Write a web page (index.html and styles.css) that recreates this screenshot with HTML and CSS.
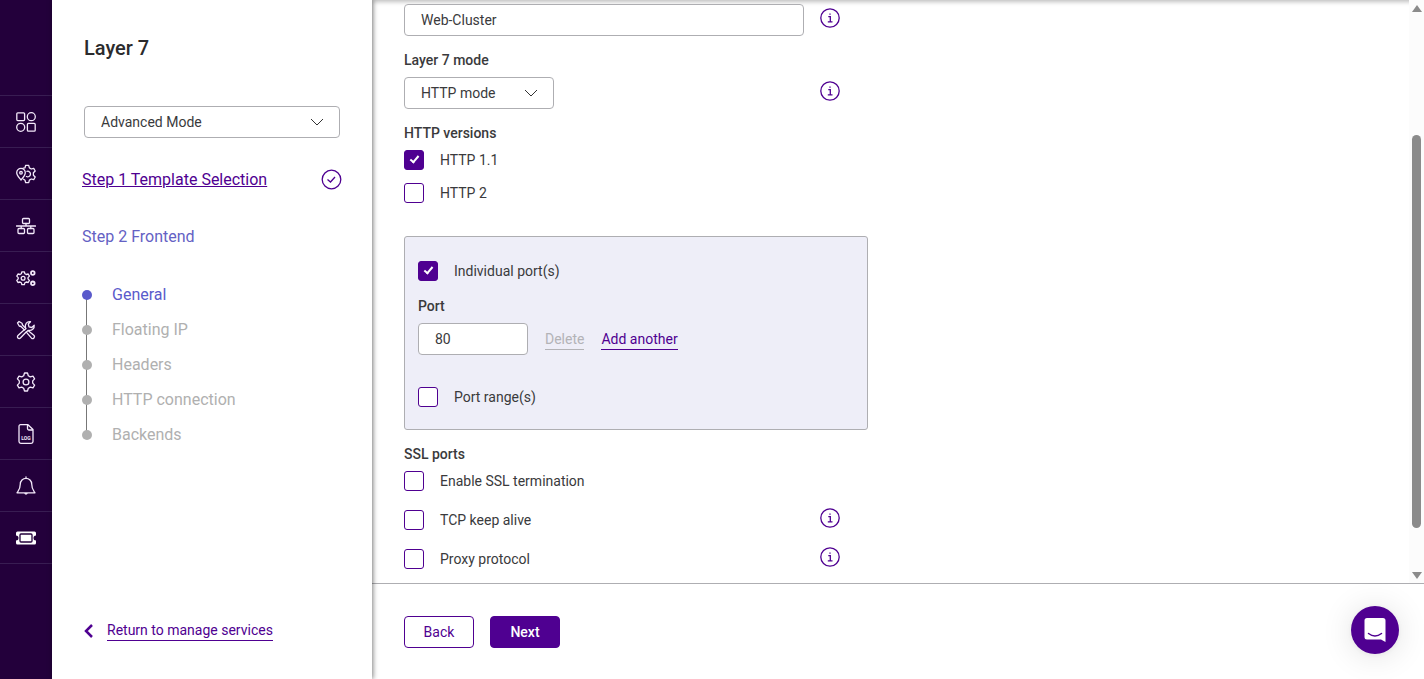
FILE: index.html
```html
<!DOCTYPE html>
<html lang="en">
<head>
    <meta charset="UTF-8">
    <meta name="viewport" content="width=device-width, initial-scale=1.0">
    <title>Layer 7</title>
    <link rel="stylesheet" href="styles.css">
</head>
<body>
    <!-- Icon rail -->
    <nav class="rail" aria-label="Main">
        <a href="#" aria-label="Dashboard">
            <svg class="icon" viewBox="0 0 20 20"><rect x="0.800" y="0.800" width="7.800" height="7.800" rx="1"/><circle cx="15.300" cy="4.700" r="4"/><circle cx="4.700" cy="15.300" r="4"/><rect x="11.400" y="11.400" width="7.800" height="7.800" rx="1"/></svg>
        </a>
        <a href="#" aria-label="Locations">
            <svg class="icon" viewBox="0 0 20 20"><path d="M7.200 4.200 L9 3.800 L9.700 1.300 H12.700 L13.400 3.900 L15.300 5 L17.700 4.300 L19.200 7 L17.400 8.800 V11.200 L19.200 13 L17.700 15.700 L15.300 15 L13.400 16.100 L12.700 18.700 H9.700 L9 16.200 L7.600 15.200"/><path d="M5 16 C3.500 14 0.700 11.300 0.700 8.700 A4.300 4.300 0 0 1 9.300 8.700 C9.300 11.300 6.600 14 5 16 Z"/><circle cx="5" cy="8.800" r="1.300"/><path d="M11 7.300 A2.800 2.800 0 1 1 10.400 12.500"/></svg>
        </a>
        <a href="#" aria-label="Network">
            <svg class="icon" viewBox="0 0 20 20"><rect x="6.500" y="2.500" width="7" height="5" rx="1"/><rect x="2" y="12.500" width="6.500" height="5" rx="1"/><rect x="11.500" y="12.500" width="6.500" height="5" rx="1"/><path d="M0.500 10 H19.500 M10 7.500 V10 M5.200 10 V12.500 M14.800 10 V12.500"/></svg>
        </a>
        <a href="#" aria-label="Cluster settings">
            <svg class="icon" viewBox="0 0 20 20"><path d="M5.900 3.800 H8.300 L8.900 5.800 L10.200 6.500 L12.200 6 L13.400 8.100 L12 9.600 V10.900 L13.400 12.400 L12.200 14.500 L10.200 14 L8.900 14.700 L8.300 16.700 H5.900 L5.300 14.700 L4 14 L2 14.500 L0.800 12.400 L2.200 10.900 V9.600 L0.800 8.100 L2 6 L4 6.500 L5.300 5.800 Z"/><circle cx="7.100" cy="10.200" r="1.900"/><circle class="thick" cx="16.800" cy="5" r="1.800"/><circle class="thick" cx="16.800" cy="15.300" r="1.800"/></svg>
        </a>
        <a href="#" aria-label="Tools">
            <svg class="icon" viewBox="0 0 20 20"><path d="M1.500 3 L3 1.500 L6 3.200 L6.500 5 L10 8.500 L8.500 10 L5 6.500 L3.200 6 Z"/><path d="M10.700 11.700 L12 10.500 L18.100 15.500 A1.900 1.900 0 0 1 15.500 18.200 L10.500 12.300 Z"/><path d="M8.300 9.700 L2 15.500 A1.700 1.700 0 0 0 4.400 18 L10.400 11.700"/><path d="M9.500 8 C8.500 4 11 1.200 14.500 1.700 L12.300 4 L13 6.800 L15.800 7.500 L18.200 5.200 C18.700 8.500 15.800 11 12.500 10.300"/></svg>
        </a>
        <a href="#" aria-label="Settings">
            <svg class="icon" viewBox="0 0 20 20"><path d="M8.500 1 H11.500 L12.300 3.700 L14.300 4.900 L17 4.200 L18.600 6.900 L16.700 8.900 V11.100 L18.600 13.100 L17 15.800 L14.300 15.100 L12.300 16.300 L11.500 19 H8.500 L7.700 16.300 L5.700 15.100 L3 15.800 L1.400 13.100 L3.300 11.100 V8.900 L1.400 6.900 L3 4.200 L5.700 4.900 L7.700 3.700 Z"/><circle cx="10" cy="10" r="2.900"/></svg>
        </a>
        <a href="#" aria-label="Logs">
            <svg class="icon" viewBox="0 0 20 20"><path d="M4.500 0.700 H12 L17 5.500 V17.500 A1.800 1.800 0 0 1 15.200 19.300 H4.800 A1.800 1.800 0 0 1 3 17.500 V2.200 A1.500 1.500 0 0 1 4.500 0.700 Z M11.500 1 V4.500 A1.500 1.500 0 0 0 13 6 H17"/><text x="10" y="15.500">LOG</text></svg>
        </a>
        <a href="#" aria-label="Alerts">
            <svg class="icon" viewBox="0 0 20 20"><path d="M10 0.800 V2.300 M10 2.300 A5.700 5.700 0 0 0 4.300 8 C4.300 13 3 14 1 16.800 H19 C17 14 15.700 13 15.700 8 A5.700 5.700 0 0 0 10 2.300 Z M8.500 17 Q10 19.200 11.500 17"/></svg>
        </a>
        <a href="#" aria-label="Support">
            <svg class="icon" viewBox="0 0 20 20"><path class="solid" d="M1.500 3.500 H18.500 A1.500 1.500 0 0 1 20 5 V7.500 A2.500 2.500 0 0 0 20 12.500 V15 A1.500 1.500 0 0 1 18.500 16.500 H1.500 A1.500 1.500 0 0 1 0 15 V12.500 A2.500 2.500 0 0 0 0 7.500 V5 A1.500 1.500 0 0 1 1.500 3.500 Z"/><rect class="inset" x="4" y="6" width="12" height="8" rx="1"/></svg>
        </a>
    </nav>

    <!-- Wizard steps -->
    <aside class="sidebar">
        <h1>Layer 7</h1>
        <select class="select" aria-label="Mode">
            <option>Advanced Mode</option>
        </select>
        <div class="step">
            <a href="#">Step 1 Template Selection</a>
            <svg class="done" viewBox="0 0 22 22"><circle cx="11.500" cy="10.500" r="9.300"/><path d="M7.500 10.500 L10.500 13 L15 8"/></svg>
        </div>
        <div class="step current">Step 2 Frontend</div>
        <ol class="substeps">
            <li class="active">General</li>
            <li>Floating IP</li>
            <li>Headers</li>
            <li>HTTP connection</li>
            <li>Backends</li>
        </ol>
        <div class="return">
            <svg viewBox="0 0 10 14"><path d="M8 1 L2 7 L8 13"/></svg>
            <a class="text-link" href="#">Return to manage services</a>
        </div>
    </aside>

    <main class="main">
        <div class="scroll-area">
            <form class="form" id="frontend-form">
                <div class="row">
                    <div class="field"><input class="text-input" type="text" aria-label="Name" value="Web-Cluster"></div>
                    <button class="info" type="button" aria-label="Name help"><svg viewBox="0 0 20 20"><circle cx="10" cy="10" r="9.200"/><path d="M8.300 8.700 H10.300 V13.800 M7.800 13.900 H12.500 M10 5.400 V6.800"/></svg></button>
                </div>

                <label class="field-label" for="l7-mode">Layer 7 mode</label>
                <div class="row">
                    <div class="field">
                        <select class="select short" id="l7-mode">
                            <option>HTTP mode</option>
                        </select>
                    </div>
                    <button class="info" type="button" aria-label="Layer 7 mode help"><svg viewBox="0 0 20 20"><circle cx="10" cy="10" r="9.200"/><path d="M8.300 8.700 H10.300 V13.800 M7.800 13.900 H12.500 M10 5.400 V6.800"/></svg></button>
                </div>

                <div class="field-label">HTTP versions</div>
                <div class="checks versions">
                    <label class="check"><input type="checkbox" checked>HTTP 1.1</label>
                    <label class="check"><input type="checkbox">HTTP 2</label>
                </div>

                <div class="ports">
                    <label class="check"><input type="checkbox" checked>Individual port(s)</label>
                    <label class="field-label" for="port">Port</label>
                    <div class="port-row">
                        <input class="text-input" type="text" id="port" value="80">
                        <a class="text-link disabled" href="#" aria-disabled="true">Delete</a>
                        <a class="text-link" href="#">Add another</a>
                    </div>
                    <label class="check"><input type="checkbox">Port range(s)</label>
                </div>

                <div class="field-label">SSL ports</div>
                <div class="checks ssl">
                    <label class="check"><input type="checkbox">Enable SSL termination</label>
                    <div class="row">
                        <label class="check field"><input type="checkbox">TCP keep alive</label>
                        <button class="info" type="button" aria-label="TCP keep alive help"><svg viewBox="0 0 20 20"><circle cx="10" cy="10" r="9.200"/><path d="M8.300 8.700 H10.300 V13.800 M7.800 13.900 H12.500 M10 5.400 V6.800"/></svg></button>
                    </div>
                    <div class="row">
                        <label class="check field"><input type="checkbox">Proxy protocol</label>
                        <button class="info" type="button" aria-label="Proxy protocol help"><svg viewBox="0 0 20 20"><circle cx="10" cy="10" r="9.200"/><path d="M8.300 8.700 H10.300 V13.800 M7.800 13.900 H12.500 M10 5.400 V6.800"/></svg></button>
                    </div>
                </div>
            </form>

            <div class="scrollbar" aria-hidden="true">
                <span class="arrow up"></span>
                <span class="track"><span class="thumb"></span></span>
                <span class="arrow down"></span>
            </div>
        </div>

        <footer class="actions">
            <button class="btn" type="button">Back</button>
            <button class="btn primary" type="submit" form="frontend-form">Next</button>
        </footer>
    </main>

    <!-- Chat launcher -->
    <button class="chat" type="button" aria-label="Open chat">
        <svg viewBox="0 0 24 26"><path class="bubble" d="M4 1 H20 A2.500 2.500 0 0 1 22.500 3.500 V25 L18 22.500 H4 A2.500 2.500 0 0 1 1.500 20 V3.500 A2.500 2.500 0 0 1 4 1 Z"/><path class="smile" d="M5.500 16.500 Q12 21.500 18.500 16.500"/></svg>
    </button>
</body>
</html>
```

FILE: styles.css
```css
* {
    box-sizing: border-box;
}

body {
    margin: 0;
    display: flex;
    height: 100vh;
    overflow: hidden;
    font-family: Roboto, "Liberation Sans", sans-serif;
    font-size: 14px;
    line-height: 20px;
    color: #3a3a3c;
    background-color: #fff;
}

input,
select,
button {
    font: inherit;
    color: inherit;
}

a {
    color: #4f0091;
}

/* Icon rail */
.rail {
    flex: 0 0 52px;
    padding-top: 95px;
    background-color: #23003b;
}

.rail a {
    display: flex;
    align-items: center;
    justify-content: center;
    height: 52px;
    border-top: 1px solid #381d52;
}

.rail a:last-child {
    height: 53px;
    border-bottom: 1px solid #381d52;
}

.icon {
    width: 20px;
    height: 20px;
    fill: none;
    stroke: #f3e8fa;
    stroke-width: 1.3;
    stroke-linejoin: round;
    stroke-linecap: round;
}

.icon .thick {
    stroke-width: 1.8;
    stroke-dasharray: none;
}

.icon .solid {
    fill: #fff;
    stroke: none;
}

.icon .inset {
    stroke: #23003b;
}

.icon text {
    font-size: 5px;
    font-weight: 700;
    text-anchor: middle;
    fill: #f3e8fa;
    stroke: none;
}

/* Sidebar */
.sidebar {
    display: flex;
    flex-direction: column;
    flex: 0 0 320px;
    padding: 36px 30px 38px;
    z-index: 1;
    background-color: #fff;
    box-shadow: 1px 0 5px rgba(0, 0, 0, 0.5);
}

.sidebar h1 {
    margin: 0 2px 46px;
    font-size: 20px;
    line-height: 24px;
    font-weight: 500;
    color: #2b2b2d;
}

.sidebar .select {
    margin: 0 2px 30px;
}

.step {
    display: flex;
    align-items: center;
    justify-content: space-between;
    height: 24px;
    margin-bottom: 33px;
    font-size: 16px;
}

.step.current {
    margin-bottom: 34px;
    color: #6461c4;
}

.done {
    width: 22px;
    height: 22px;
    fill: none;
    stroke: #4f0091;
    stroke-width: 1.3;
}

.substeps {
    margin: 0;
    padding: 0;
    list-style: none;
    font-size: 16px;
    color: #b0b0b0;
}

.substeps li {
    position: relative;
    height: 35px;
    padding-left: 30px;
    line-height: 24px;
}

.substeps li::before {
    content: "";
    position: absolute;
    top: 7px;
    left: 0;
    z-index: 1;
    width: 10px;
    height: 10px;
    border-radius: 50%;
    background-color: #b0b0b0;
}

/* line joining each dot to the next one */
.substeps li:not(:last-child)::after {
    content: "";
    position: absolute;
    top: 12px;
    left: 4px;
    height: 35px;
    border-left: 1px solid #777;
}

.substeps .active {
    color: #5a5acb;
}

.substeps .active::before {
    background-color: #5a5acb;
}

.return {
    display: flex;
    align-items: center;
    gap: 13px;
    margin-top: auto;
    padding-left: 2px;
}

.return svg {
    width: 10px;
    height: 14px;
    fill: none;
    stroke: #4f0091;
    stroke-width: 2.5;
}

.text-link {
    line-height: 20px;
    text-decoration: none;
    border-bottom: 1px solid;
}

.text-link.disabled {
    color: #b3b3b7;
}

/* Main column */
.main {
    display: flex;
    flex-direction: column;
    flex: 1;
    min-width: 0;
}

.scroll-area {
    display: flex;
    justify-content: space-between;
    flex: 1;
    min-height: 0;
    box-shadow: inset 0 4px 4px -2px rgba(0, 0, 0, 0.25);
}

.form {
    width: 528px;
    padding: 4px 32px 0;
}

.row {
    display: flex;
    align-items: center;
    gap: 16px;
}

.field {
    flex: 0 0 400px;
}

.field-label {
    display: block;
    margin: 14px 0 7px;
    font-weight: 500;
}

.text-input,
.select {
    display: block;
    width: 100%;
    height: 32px;
    padding: 0 16px;
    border: 1px solid #aeaeb2;
    border-radius: 4px;
    background-color: #fff;
}

.select {
    appearance: none;
    background-image: url("data:image/svg+xml,%3Csvg xmlns='http://www.w3.org/2000/svg' width='14' height='8' fill='none' stroke='%23333'%3E%3Cpath d='M1 1 L7 7 L13 1'/%3E%3C/svg%3E");
    background-repeat: no-repeat;
    background-position: right 15px center;
}

.sidebar .select {
    width: auto;
}

.select.short {
    width: 150px;
}

.checks {
    display: flex;
    flex-direction: column;
}

.versions {
    gap: 13px;
}

.ssl {
    gap: 19px;
}

.check {
    display: flex;
    align-items: center;
    gap: 16px;
    height: 20px;
}

.checks .row {
    height: 20px;
}

.check input {
    appearance: none;
    display: flex;
    align-items: center;
    justify-content: center;
    width: 20px;
    height: 20px;
    margin: 0;
    border: 1px solid #4f0091;
    border-radius: 3px;
    background-color: #fff;
}

.check input:checked {
    background-color: #4f0091;
}

.check input:checked::after {
    content: "";
    width: 5px;
    height: 9px;
    margin-bottom: 3px;
    border: solid #fff;
    border-width: 0 2px 2px 0;
    box-sizing: border-box;
    transform: rotate(40deg);
}

.info {
    width: 20px;
    height: 20px;
    margin-bottom: 4px;
    padding: 0;
    border: none;
    background: none;
}

.info svg {
    display: block;
    fill: none;
    stroke: #4f0091;
    stroke-width: 1.3;
}

.ports {
    margin-top: 33px;
    padding: 24px 13px 22px;
    border: 1px solid #aeaeb2;
    border-radius: 3px;
    background-color: #eeeef8;
}

.ports .field-label {
    margin-top: 15px;
}

.port-row {
    display: flex;
    align-items: center;
    gap: 17px;
    margin-bottom: 32px;
}

.port-row .text-input {
    width: 110px;
}

.scrollbar {
    display: flex;
    flex-direction: column;
    align-items: center;
    width: 15px;
    padding: 5px 0 4px;
    background-color: #fcfcfc;
}

.track {
    flex: 1;
    padding-top: 123px;
}

.thumb {
    display: block;
    width: 9px;
    height: 90%;
    border-radius: 5px;
    background-color: #8b8b8b;
}

.arrow {
    border: solid transparent;
    border-width: 0 5px;
}

.arrow.up {
    border-bottom: 7px solid #8b8b8b;
}

.arrow.down {
    border-top: 7px solid #8b8b8b;
}

/* Bottom bar */
.actions {
    display: flex;
    gap: 16px;
    padding: 32px 32px 31px;
    border-top: 1px solid #aeaeb2;
}

.btn {
    width: 70px;
    height: 32px;
    padding: 0;
    border: 1px solid #4f0091;
    border-radius: 4px;
    color: #4f0091;
    background-color: #fff;
}

.btn.primary {
    font-weight: 500;
    color: #fff;
    background-color: #4f0091;
}

.chat {
    position: fixed;
    right: 25px;
    bottom: 25px;
    display: flex;
    align-items: center;
    justify-content: center;
    width: 48px;
    height: 48px;
    padding: 0;
    border: none;
    border-radius: 50%;
    background-color: #4f0091;
    box-shadow: 0 1px 6px rgba(0, 0, 0, 0.06), 0 2px 32px rgba(0, 0, 0, 0.12);
}

.chat svg {
    width: 24px;
    height: 26px;
}

.chat .bubble {
    fill: #fff;
}

.chat .smile {
    fill: none;
    stroke: #4f0091;
    stroke-width: 1.5;
    stroke-linecap: round;
}
```
